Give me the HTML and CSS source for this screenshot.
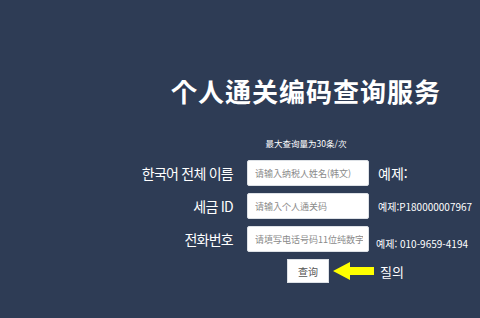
FILE: index.html
```html
<!DOCTYPE html>
<html lang="ko">
<head>
    <meta charset="UTF-8">
    <meta name="viewport" content="width=device-width, initial-scale=1.0">
    <title>个人通关编码查询服务</title>
    <link rel="stylesheet" href="styles.css">
</head>
<body>

    <div class="container">
        <h2>个人通关编码查询服务</h2>
        <p class="note">最大查询量为30条/次</p>

        <div class="row">
            <label>한국어 전체 이름</label>
            <input type="text" placeholder="请输入纳税人姓名(韩文)">
            <span class="example big">예제:</span>
        </div>

        <div class="row">
            <label>세금 ID</label>
            <input type="text" placeholder="请输入个人通关码">
            <span class="example">예제:P180000007967</span>
        </div>

        <div class="row">
            <label>전화번호</label>
            <input type="text" placeholder="请填写电话号码11位纯数字">
            <span class="example low">예제: 010-9659-4194</span>
        </div>

        <div class="actions">
            <button>查询</button>
            <svg class="arrow" width="42" height="20" viewBox="0 0 42 20">
                <polygon points="0,10 17,1 17,6 41,6 41,14 17,14 17,19" fill="#ffff00"/>
            </svg>
            <span class="hint">질의</span>
        </div>
    </div>

</body>
</html>
```

FILE: styles.css
```css
body {
    margin: 0;
    background: #2e3c55;
    font-family: "Noto Sans CJK KR", "Noto Sans CJK SC", sans-serif;
    color: #fff;
}
.container {
    margin-left: 132px;
    width: 348px;
    padding-top: 72px;
}
h2 {
    margin: 0;
    text-align: center;
    font-family: "Noto Sans CJK SC", sans-serif;
    font-size: 26px;
    font-weight: bold;
    letter-spacing: 1px;
    line-height: 38px;
}
.note {
    margin: 27px 0 11px;
    text-align: center;
    font-family: "Noto Sans CJK SC", sans-serif;
    font-size: 8.5px;
    line-height: 12px;
}
.row {
    display: grid;
    grid-template-columns: 101px 122px auto;
    column-gap: 14px;
    align-items: center;
    margin-bottom: 7px;
}
.row label {
    text-align: right;
    font-size: 14px;
    letter-spacing: -0.75px;
    white-space: nowrap;
}
input {
    box-sizing: border-box;
    width: 122px;
    height: 26px;
    padding: 0 5px 0 7px;
    border: 1px solid #dde1e6;
    border-radius: 2px;
    background: #fff;
    font-family: "Noto Sans CJK SC", sans-serif;
    font-size: 9px;
    outline: none;
}
input::placeholder {
    color: #8a8a8a;
}
.example {
    margin-left: -5px;
    font-size: 10px;
    white-space: nowrap;
}
.example.big {
    font-size: 14px;
}
.example.low {
    margin-left: -7px;
    padding-top: 8px;
}
.actions {
    display: flex;
    align-items: center;
    margin-left: 155px;
    margin-top: 7px;
}
button {
    width: 42px;
    height: 24px;
    padding: 0;
    border: 1px solid #dde1e6;
    background: #fff;
    color: #555;
    font-family: "Noto Sans CJK SC", sans-serif;
    font-size: 10px;
}
.arrow {
    margin-left: 4px;
}
.hint {
    margin-left: 5px;
    font-size: 13px;
}
```
